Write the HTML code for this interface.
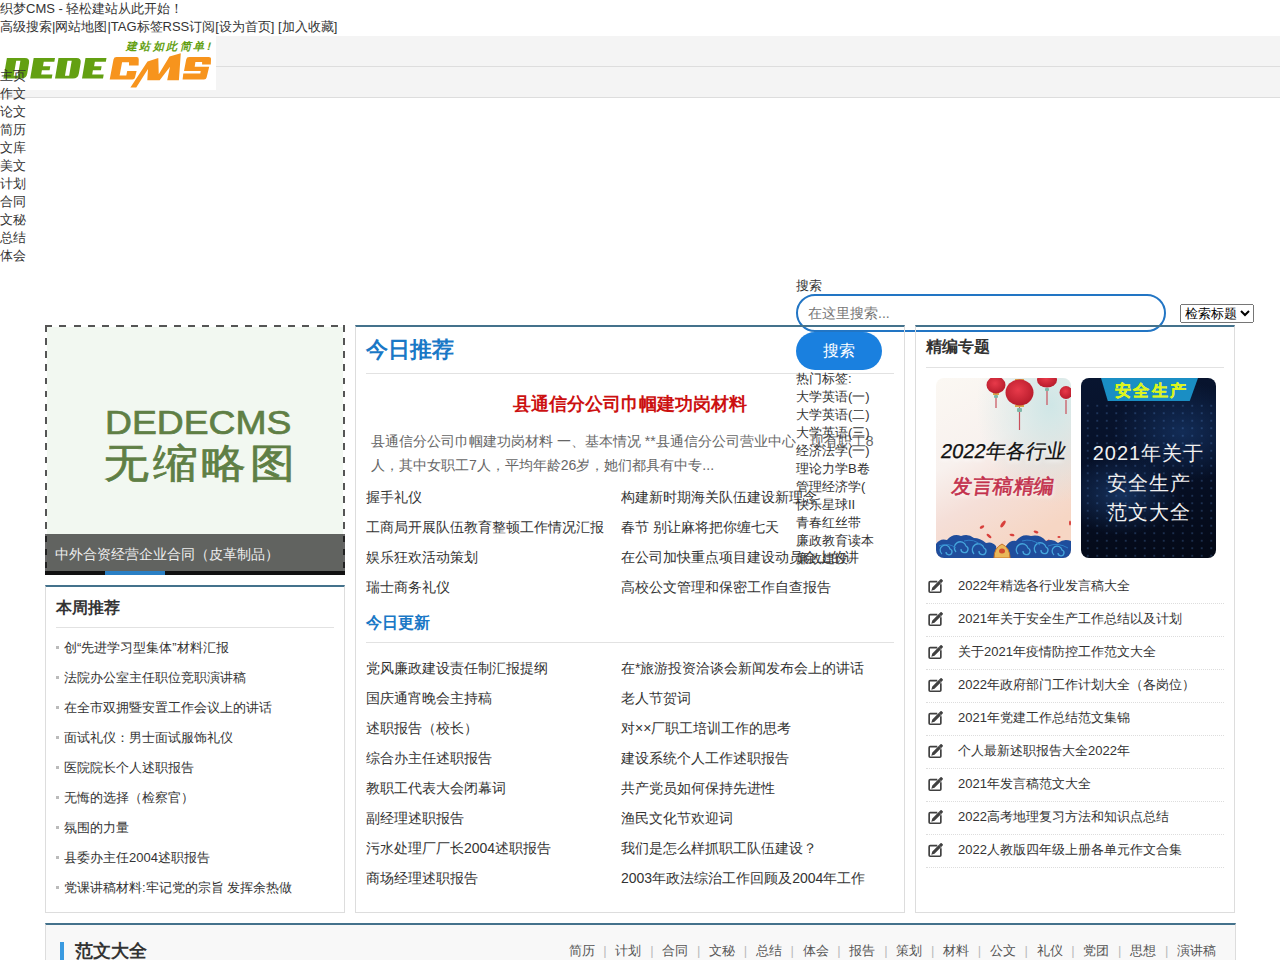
<!DOCTYPE html>
<html><head><meta charset="utf-8"><title>织梦CMS</title>
<style>
html,body{margin:0;padding:0;width:1280px;height:960px;overflow:hidden;background:#fff}
body{font-family:"Liberation Sans",sans-serif;font-size:13px;line-height:18px;color:#333;position:relative}
.abs{position:absolute}
ul{list-style:none;margin:0;padding:0}
a{color:inherit;text-decoration:none}
#top1{left:0;top:0;white-space:nowrap}
#top2{left:0;top:18px;white-space:nowrap}
#bar1{left:0;top:36px;width:1280px;height:30px;background:#f4f4f4;border-bottom:1px solid #ddd}
#bar2{left:0;top:67px;width:1280px;height:30px;background:#f4f4f4;border-bottom:1px solid #ddd}
#logo{left:0;top:36px;width:216px;height:54px;background:#fff}
#nav{left:0;top:67px}
#nav li{height:18px}
#slab{left:796px;top:277px}
#sinput{left:796px;top:294px;width:366px;height:34px;border:2px solid #2275c4;border-radius:19px;box-sizing:content-box}
#sinput span{position:absolute;left:10px;top:8px;font-size:14px;color:#777}
#ssel{left:1180px;top:304px;font-family:"Liberation Sans",sans-serif;font-size:13.333px}
#sbtn{left:796px;top:332px;width:86px;height:38px;border-radius:19px;background:#1a80df;color:#fff;font-size:16px;line-height:38px;text-align:center}
#tags{left:796px;top:370px}
.box{position:absolute;z-index:2;border:1px solid #ddd;border-top:2px solid #44728c;box-sizing:border-box}
#slide{left:47px;top:327px;width:296px;height:246px;background:#f2f8f1;overflow:hidden}
#slideb{left:45px;top:325px;width:300px;height:250px;box-sizing:border-box;border:2px dashed #555}
#cap{left:45px;top:534px;width:300px;height:37px;background:rgba(0,0,0,.6);color:#eee;font-size:14px;line-height:37px;padding-top:2px;box-sizing:border-box}
#capbar{left:45px;top:571px;width:300px;height:4px;background:#111}
#capind{left:105px;top:571px;width:60px;height:4px;background:#2a7fc4}
#weekbox{left:45px;top:585px;width:300px;height:328px}
#midbox{left:355px;top:325px;width:550px;height:588px}
#rbox{left:915px;top:325px;width:320px;height:588px}
#foot{left:45px;top:923px;width:1191px;height:60px;background:#f8f8f8;border-top:2px solid #44728c;border-right:1px solid #ddd;border-left:1px solid #ddd;box-sizing:border-box}
.list2{width:540px}
.list2 li{float:left;width:255px;height:30px;line-height:30px;font-size:14px;white-space:nowrap;overflow:hidden}
#week li{height:30px;line-height:30px;padding-left:8px;position:relative;white-space:nowrap}
#week li:before{content:"";position:absolute;left:0;top:13px;width:3px;height:3px;background:#bbb}
#ztl li{height:32px;line-height:30px;border-bottom:1px dotted #ddd;font-size:13px;padding-left:32px;position:relative}
#ztl .ico{position:absolute;left:1px;top:7px}
#fnav i{font-style:normal;color:#bbb;display:inline-block;width:20.8px;text-align:center}
</style></head>
<body>
<div class="abs" id="top1">织梦CMS - 轻松建站从此开始！</div>
<div class="abs" id="top2">高级搜索|网站地图|TAG标签RSS订阅[设为首页] [加入收藏]</div>
<div class="abs" id="bar1"></div>
<div class="abs" id="bar2"></div>
<div class="abs" id="logo"><svg width="216" height="54" viewBox="0 36 216 54" style="display:block">
<g transform="translate(0,78.5) skewX(-9.65)" fill="#63a012" fill-rule="evenodd">
<path d="M3.4,-20.5H21.4Q26.4,-20.5 26.4,-15.5V-5Q26.4,0 21.4,0H3.4ZM13.2,-17.7H17.4V-2.7H13.2Z"/>
<path d="M30.2,-20.5H51.5V-16.8H40.9V-12.3H48.2V-8.3H40.5V-4.1H51.7V0H30.2Z"/>
<path d="M55,-20.5H73Q78,-20.5 78,-15.5V-5Q78,0 73,0H55ZM64.5,-17.7H68.7V-2.7H64.5Z"/>
<path d="M82,-20.5H103V-16.8H92V-12.3H99.5V-8.3H91.5V-4.1H103V0H82Z"/>
</g>
<g fill="#f7941d">
<path d="M116.6,57.1H136.75Q138.9,57.1 138.75,59.5L138.6,65.4H129V62.2H122.1L119.6,75.5H126.3L127.2,71.1H136.6L135,77.4Q134.6,79.4 132.5,79.4H109.7L113.5,59.5Q114,57.1 116.6,57.1Z"/>
<path d="M130.4,87.4H136.25L148,69.1L147.3,80.3H159.7L170,66.75L167.2,80.3H178.9L180.8,53.2L169.5,56.4L158.75,74.25L158.3,58.1L147.5,61.4Z"/>
<path d="M189.2,57.1H208.6Q211.2,57.1 211,59.5L210.8,64.5H202.1V61.9H195.4L194.7,66.7H209.2L206.6,77.4Q206.2,79.4 204,79.4H182.6L183.3,73.4H200.3L200.7,71.1H184L186.2,59.5Q186.6,57.1 189.2,57.1Z"/>
</g>
<text x="0" y="0" font-size="11" font-weight="bold" fill="#63a012" letter-spacing="2.6" transform="translate(126,50) skewX(-14)" style="font-family:'Liberation Sans',sans-serif">建站如此简单!</text>
</svg></div>
<ul class="abs" id="nav"><li>主页</li><li>作文</li><li>论文</li><li>简历</li><li>文库</li><li>美文</li><li>计划</li><li>合同</li><li>文秘</li><li>总结</li><li>体会</li></ul>

<!-- boxes -->
<div class="abs" id="slide"><div style="position:absolute;left:-2px;top:76px;width:300px;color:#5f7f45">
<div style="position:absolute;left:60px;top:0;font-size:33px;line-height:40px;transform:scaleX(1.13);transform-origin:0 0;-webkit-text-stroke:0.7px #5f7f45">DEDECMS</div>
<div style="position:absolute;left:59px;top:38px;font-size:40px;line-height:44px;letter-spacing:3.5px;transform:scaleX(1.12);transform-origin:0 0;-webkit-text-stroke:0.8px #5f7f45">无缩略图</div></div></div>

<div class="abs" style="left:45px;top:325px;width:300px;height:2px;background:repeating-linear-gradient(90deg,#555 0 7.2px,transparent 7.2px 14.29px)"></div>
<div class="abs" style="left:45px;top:573px;width:300px;height:2px;background:repeating-linear-gradient(90deg,#555 0 7.2px,transparent 7.2px 14.29px)"></div>
<div class="abs" style="left:45px;top:325px;width:2px;height:250px;background:repeating-linear-gradient(180deg,#555 0 6.6px,transparent 6.6px 13.16px)"></div>
<div class="abs" style="left:343px;top:325px;width:2px;height:250px;background:repeating-linear-gradient(180deg,#555 0 6.6px,transparent 6.6px 13.16px)"></div>
<div class="abs" id="cap"><span style="padding-left:10px">中外合资经营企业合同（皮革制品）</span></div>
<div class="abs" id="capbar"></div>
<div class="abs" id="capind"></div>

<div class="box" id="weekbox"></div>
<div class="box" id="midbox"></div>
<div class="box" id="rbox"></div>
<div class="abs" id="foot"></div>

<div class="abs" id="h_today" style="left:366px;top:335px;font-size:22px;line-height:30px;font-weight:bold;color:#1a78c6">今日推荐</div>
<div class="abs" style="left:366px;top:373px;width:528px;height:1px;background:#e2e2e2"></div>
<div class="abs" id="redt" style="left:366px;top:392px;width:528px;text-align:center;font-size:18px;line-height:24px;font-weight:bold;color:#cc1111">县通信分公司巾帼建功岗材料</div>
<div class="abs" id="summ" style="left:371px;top:429px;width:523px;font-size:14px;line-height:24px;color:#666">县通信分公司巾帼建功岗材料 一、基本情况 **县通信分公司营业中心，现有职工8<br>人，其中女职工7人，平均年龄26岁，她们都具有中专...</div>
<ul class="abs list2" id="rec" style="left:366px;top:482px">
<li>握手礼仪</li><li>构建新时期海关队伍建设新理念</li>
<li>工商局开展队伍教育整顿工作情况汇报</li><li>春节 别让麻将把你缠七天</li>
<li>娱乐狂欢活动策划</li><li>在公司加快重点项目建设动员会上的讲</li>
<li>瑞士商务礼仪</li><li>高校公文管理和保密工作自查报告</li>
</ul>
<div class="abs" id="h_upd" style="left:366px;top:611px;font-size:16px;line-height:24px;font-weight:bold;color:#1a78c6">今日更新</div>
<div class="abs" style="left:366px;top:642px;width:528px;height:1px;background:#e2e2e2"></div>
<ul class="abs list2" id="upd" style="left:366px;top:653px">
<li>党风廉政建设责任制汇报提纲</li><li>在*旅游投资洽谈会新闻发布会上的讲话</li>
<li>国庆通宵晚会主持稿</li><li>老人节贺词</li>
<li>述职报告（校长）</li><li>对××厂职工培训工作的思考</li>
<li>综合办主任述职报告</li><li>建设系统个人工作述职报告</li>
<li>教职工代表大会闭幕词</li><li>共产党员如何保持先进性</li>
<li>副经理述职报告</li><li>渔民文化节欢迎词</li>
<li>污水处理厂厂长2004述职报告</li><li>我们是怎么样抓职工队伍建设？</li>
<li>商场经理述职报告</li><li>2003年政法综治工作回顾及2004年工作</li>
</ul>
<div class="abs" id="h_week" style="left:56px;top:596px;font-size:16px;line-height:24px;font-weight:bold;color:#333">本周推荐</div>
<div class="abs" style="left:56px;top:627px;width:278px;height:1px;background:#e2e2e2"></div>
<ul class="abs" id="week" style="left:56px;top:633px">
<li>创“先进学习型集体”材料汇报</li><li>法院办公室主任职位竞职演讲稿</li><li>在全市双拥暨安置工作会议上的讲话</li><li>面试礼仪：男士面试服饰礼仪</li><li>医院院长个人述职报告</li><li>无悔的选择（检察官）</li><li>氛围的力量</li><li>县委办主任2004述职报告</li><li>党课讲稿材料:牢记党的宗旨 发挥余热做</li>
</ul>
<div class="abs" id="h_zt" style="left:926px;top:335px;font-size:16px;line-height:24px;font-weight:bold;color:#333">精编专题</div>
<div class="abs" style="left:926px;top:367px;width:298px;height:1px;background:#e2e2e2"></div>
<ul class="abs" id="ztl" style="left:926px;top:571px;width:298px">
<li><svg class="ico" width="17" height="16" viewBox="0 0 17 16"><path d="M10.3,3.65H3.15Q2.15,3.65 2.15,4.65V13.25Q2.15,14.25 3.15,14.25H12.85Q13.85,14.25 13.85,13.25V6.3" fill="none" stroke="#404040" stroke-width="1.67"/><path d="M4.3,12.7L7.5,11.7L15.7,3.5Q16.3,2.9 15.7,2.3L14.7,1.3Q14.1,0.7 13.5,1.3L5.3,9.5Z" fill="#404040"/><path d="M12.2,3.3L14.7,5.8" stroke="#888" stroke-width="0.6"/></svg>2022年精选各行业发言稿大全</li><li><svg class="ico" width="17" height="16" viewBox="0 0 17 16"><path d="M10.3,3.65H3.15Q2.15,3.65 2.15,4.65V13.25Q2.15,14.25 3.15,14.25H12.85Q13.85,14.25 13.85,13.25V6.3" fill="none" stroke="#404040" stroke-width="1.67"/><path d="M4.3,12.7L7.5,11.7L15.7,3.5Q16.3,2.9 15.7,2.3L14.7,1.3Q14.1,0.7 13.5,1.3L5.3,9.5Z" fill="#404040"/><path d="M12.2,3.3L14.7,5.8" stroke="#888" stroke-width="0.6"/></svg>2021年关于安全生产工作总结以及计划</li><li><svg class="ico" width="17" height="16" viewBox="0 0 17 16"><path d="M10.3,3.65H3.15Q2.15,3.65 2.15,4.65V13.25Q2.15,14.25 3.15,14.25H12.85Q13.85,14.25 13.85,13.25V6.3" fill="none" stroke="#404040" stroke-width="1.67"/><path d="M4.3,12.7L7.5,11.7L15.7,3.5Q16.3,2.9 15.7,2.3L14.7,1.3Q14.1,0.7 13.5,1.3L5.3,9.5Z" fill="#404040"/><path d="M12.2,3.3L14.7,5.8" stroke="#888" stroke-width="0.6"/></svg>关于2021年疫情防控工作范文大全</li><li><svg class="ico" width="17" height="16" viewBox="0 0 17 16"><path d="M10.3,3.65H3.15Q2.15,3.65 2.15,4.65V13.25Q2.15,14.25 3.15,14.25H12.85Q13.85,14.25 13.85,13.25V6.3" fill="none" stroke="#404040" stroke-width="1.67"/><path d="M4.3,12.7L7.5,11.7L15.7,3.5Q16.3,2.9 15.7,2.3L14.7,1.3Q14.1,0.7 13.5,1.3L5.3,9.5Z" fill="#404040"/><path d="M12.2,3.3L14.7,5.8" stroke="#888" stroke-width="0.6"/></svg>2022年政府部门工作计划大全（各岗位）</li><li><svg class="ico" width="17" height="16" viewBox="0 0 17 16"><path d="M10.3,3.65H3.15Q2.15,3.65 2.15,4.65V13.25Q2.15,14.25 3.15,14.25H12.85Q13.85,14.25 13.85,13.25V6.3" fill="none" stroke="#404040" stroke-width="1.67"/><path d="M4.3,12.7L7.5,11.7L15.7,3.5Q16.3,2.9 15.7,2.3L14.7,1.3Q14.1,0.7 13.5,1.3L5.3,9.5Z" fill="#404040"/><path d="M12.2,3.3L14.7,5.8" stroke="#888" stroke-width="0.6"/></svg>2021年党建工作总结范文集锦</li><li><svg class="ico" width="17" height="16" viewBox="0 0 17 16"><path d="M10.3,3.65H3.15Q2.15,3.65 2.15,4.65V13.25Q2.15,14.25 3.15,14.25H12.85Q13.85,14.25 13.85,13.25V6.3" fill="none" stroke="#404040" stroke-width="1.67"/><path d="M4.3,12.7L7.5,11.7L15.7,3.5Q16.3,2.9 15.7,2.3L14.7,1.3Q14.1,0.7 13.5,1.3L5.3,9.5Z" fill="#404040"/><path d="M12.2,3.3L14.7,5.8" stroke="#888" stroke-width="0.6"/></svg>个人最新述职报告大全2022年</li><li><svg class="ico" width="17" height="16" viewBox="0 0 17 16"><path d="M10.3,3.65H3.15Q2.15,3.65 2.15,4.65V13.25Q2.15,14.25 3.15,14.25H12.85Q13.85,14.25 13.85,13.25V6.3" fill="none" stroke="#404040" stroke-width="1.67"/><path d="M4.3,12.7L7.5,11.7L15.7,3.5Q16.3,2.9 15.7,2.3L14.7,1.3Q14.1,0.7 13.5,1.3L5.3,9.5Z" fill="#404040"/><path d="M12.2,3.3L14.7,5.8" stroke="#888" stroke-width="0.6"/></svg>2021年发言稿范文大全</li><li><svg class="ico" width="17" height="16" viewBox="0 0 17 16"><path d="M10.3,3.65H3.15Q2.15,3.65 2.15,4.65V13.25Q2.15,14.25 3.15,14.25H12.85Q13.85,14.25 13.85,13.25V6.3" fill="none" stroke="#404040" stroke-width="1.67"/><path d="M4.3,12.7L7.5,11.7L15.7,3.5Q16.3,2.9 15.7,2.3L14.7,1.3Q14.1,0.7 13.5,1.3L5.3,9.5Z" fill="#404040"/><path d="M12.2,3.3L14.7,5.8" stroke="#888" stroke-width="0.6"/></svg>2022高考地理复习方法和知识点总结</li><li><svg class="ico" width="17" height="16" viewBox="0 0 17 16"><path d="M10.3,3.65H3.15Q2.15,3.65 2.15,4.65V13.25Q2.15,14.25 3.15,14.25H12.85Q13.85,14.25 13.85,13.25V6.3" fill="none" stroke="#404040" stroke-width="1.67"/><path d="M4.3,12.7L7.5,11.7L15.7,3.5Q16.3,2.9 15.7,2.3L14.7,1.3Q14.1,0.7 13.5,1.3L5.3,9.5Z" fill="#404040"/><path d="M12.2,3.3L14.7,5.8" stroke="#888" stroke-width="0.6"/></svg>2022人教版四年级上册各单元作文合集</li>
</ul>
<div class="abs" id="img1" style="left:936px;top:378px;width:135px;height:180px;border-radius:8px;overflow:hidden">
<svg width="135" height="180" viewBox="0 0 135 180" style="position:absolute;left:0;top:0">
<defs>
<linearGradient id="g1" x1="0" y1="0" x2="0.4" y2="1"><stop offset="0" stop-color="#fbf8f3"/><stop offset="0.45" stop-color="#f8f1ee"/><stop offset="0.7" stop-color="#f5dfd8"/><stop offset="1" stop-color="#f6d6c4"/></linearGradient>
<radialGradient id="g2" cx="0.85" cy="0.15" r="0.55"><stop offset="0" stop-color="#cfe6e6"/><stop offset="1" stop-color="#cfe6e6" stop-opacity="0"/></radialGradient>
<radialGradient id="lan" cx="0.45" cy="0.4" r="0.6"><stop offset="0" stop-color="#e83a4a"/><stop offset="1" stop-color="#b81c2c"/></radialGradient>
</defs>
<rect width="135" height="180" fill="url(#g1)"/>
<rect width="135" height="180" fill="url(#g2)"/>
<g stroke="#c9505c" stroke-width="1.2"><line x1="60" y1="17" x2="60" y2="30"/><line x1="83.5" y1="29" x2="83.5" y2="52"/><line x1="111" y1="10" x2="111" y2="27"/><line x1="130" y1="22" x2="130" y2="36"/></g><g fill="#7fb7a8"><rect x="81" y="30" width="5" height="4" rx="1"/><rect x="58" y="17" width="4" height="3" rx="1"/><rect x="109" y="10" width="4" height="3" rx="1"/></g><g fill="#d9a24a"><rect x="79" y="1" width="9" height="2"/><rect x="79" y="27" width="9" height="2"/><rect x="57" y="15" width="6" height="2"/></g>
<ellipse cx="60" cy="7" rx="9.5" ry="8.5" fill="url(#lan)"/>
<ellipse cx="83.5" cy="14.5" rx="14" ry="13" fill="url(#lan)"/>
<ellipse cx="111" cy="2" rx="10" ry="7.5" fill="url(#lan)"/>
<ellipse cx="130" cy="14.5" rx="6.5" ry="6.5" fill="url(#lan)"/>
<g fill="#d8403c"><ellipse cx="67" cy="146" rx="4" ry="1.6" transform="rotate(-55 67 146)"/><ellipse cx="46" cy="149" rx="2.5" ry="1.3" transform="rotate(-30 46 149)"/><ellipse cx="53" cy="158" rx="3" ry="1.3" transform="rotate(40 53 158)"/><ellipse cx="76" cy="157" rx="2.5" ry="1.2" transform="rotate(10 76 157)"/><ellipse cx="100" cy="154" rx="2.5" ry="1.2" transform="rotate(15 100 154)"/><ellipse cx="112" cy="163" rx="2" ry="1" transform="rotate(-40 112 163)"/><ellipse cx="123" cy="159" rx="1.6" ry="1"/><ellipse cx="134" cy="145" rx="1" ry="2.5"/></g>
<path d="M0,166 Q4,160 11,162 Q17,155 25,158 Q32,155 38,160 Q44,160 50,165 Q56,163 60,168 L62,180 H0Z" fill="#1f4d9c"/>
<path d="M70,168 Q74,162 80,163 Q86,155 95,158 Q104,156 110,163 Q117,160 122,165 Q128,160 135,163 V180 H66Z" fill="#1f4d9c"/>
<g fill="none" stroke="#45a5dc" stroke-width="1.3"><path d="M6,176 a5,5 0 1 1 8,-5 a3,3 0 1 1 -4,3"/><path d="M20,174 a6,6 0 1 1 10,-6 a3.5,3.5 0 1 1 -5,3"/><path d="M38,176 a6,6 0 1 1 10,-6 a3.5,3.5 0 1 1 -5,3"/><path d="M82,176 a6,6 0 1 1 10,-6 a3.5,3.5 0 1 1 -5,3"/><path d="M100,175 a6,6 0 1 1 10,-6 a3.5,3.5 0 1 1 -5,3"/><path d="M118,177 a5,5 0 1 1 8,-5 a3,3 0 1 1 -4,3"/></g>
<g fill="none" stroke="#2f7fc8" stroke-width="1"><path d="M3,168 Q12,164 20,170"/><path d="M28,163 Q38,160 46,168"/><path d="M86,163 Q96,160 104,167"/><path d="M112,168 Q122,164 132,170"/></g>
<path d="M58,180 Q58,170 66,166 Q74,170 74,180Z" fill="#e9b85a" stroke="#c7702a" stroke-width="1"/>
<ellipse cx="66" cy="173" rx="3" ry="2.5" fill="#d24a2e"/>
</svg>
<div style="position:absolute;left:0;top:60px;width:135px;text-align:center;font-size:20px;line-height:26px;color:#111;-webkit-text-stroke:0.3px #111;text-shadow:0 2px 4px #fff;transform:skewX(-10deg)">2022年各行业</div>
<div style="position:absolute;left:0;top:96px;width:135px;text-align:center;font-size:20px;line-height:24px;color:#c3304c;-webkit-text-stroke:0.6px #c3304c;letter-spacing:0.5px;text-shadow:0 2px 4px #fff;transform:skewX(-8deg)">发言稿精编</div>
</div>
<div class="abs" id="img2" style="left:1081px;top:378px;width:135px;height:180px;border-radius:8px;overflow:hidden;background:radial-gradient(ellipse 60px 40px at 30% 65%,rgba(40,90,160,.45),transparent),radial-gradient(ellipse 70px 50px at 75% 30%,rgba(30,70,130,.5),transparent),linear-gradient(170deg,#081530 0%,#061027 50%,#040916 100%)">
<div style="position:absolute;left:0;top:24px;width:135px;height:156px;background:radial-gradient(circle,rgba(90,140,210,.7) 0.6px,transparent 1.1px) 2px 0/9.5px 7.5px;opacity:.45"></div>
<div style="position:absolute;left:20px;top:0;width:97px;height:23px;background:#1a8ec4;clip-path:polygon(0 0,100% 0,91.5% 100%,7% 100%)"></div>
<div style="position:absolute;left:0;top:2px;width:135px;color:#dcf520;font-weight:bold;font-size:16px;line-height:22px;text-align:center;letter-spacing:2.5px;padding-left:3px;-webkit-text-stroke:0.4px #dcf520">安全生产</div>
<div style="position:absolute;left:0;top:61px;width:135px;text-align:center;color:#f0f0f0;font-size:20px;line-height:29.5px;letter-spacing:1px">2021年关于<br>安全生产<br>范文大全</div>
</div>
<div class="abs" style="left:60px;top:942px;width:4px;height:20px;background:#3a9ae0"></div>
<div class="abs" style="left:75px;top:938px;font-size:18px;line-height:26px;font-weight:bold;color:#333">范文大全</div>
<div class="abs" id="fnav" style="right:64px;top:942px;color:#555;white-space:nowrap"><a>简历</a><i>|</i><a>计划</a><i>|</i><a>合同</a><i>|</i><a>文秘</a><i>|</i><a>总结</a><i>|</i><a>体会</a><i>|</i><a>报告</a><i>|</i><a>策划</a><i>|</i><a>材料</a><i>|</i><a>公文</a><i>|</i><a>礼仪</a><i>|</i><a>党团</a><i>|</i><a>思想</a><i>|</i><a>演讲稿</a></div>
<!-- search -->
<div class="abs" id="slab">搜索</div>
<div class="abs" id="sinput"><span>在这里搜索...</span></div>
<select class="abs" id="ssel"><option>检索标题</option></select>
<div class="abs" id="sbtn">搜索</div>
<ul class="abs" id="tags"><li>热门标签:</li><li>大学英语(一)</li><li>大学英语(二)</li><li>大学英语(三)</li><li>经济法学(一)</li><li>理论力学B卷</li><li>管理经济学(</li><li>快乐星球II</li><li>青春红丝带</li><li>廉政教育读本</li><li>廉政建设</li></ul>
</body></html>
